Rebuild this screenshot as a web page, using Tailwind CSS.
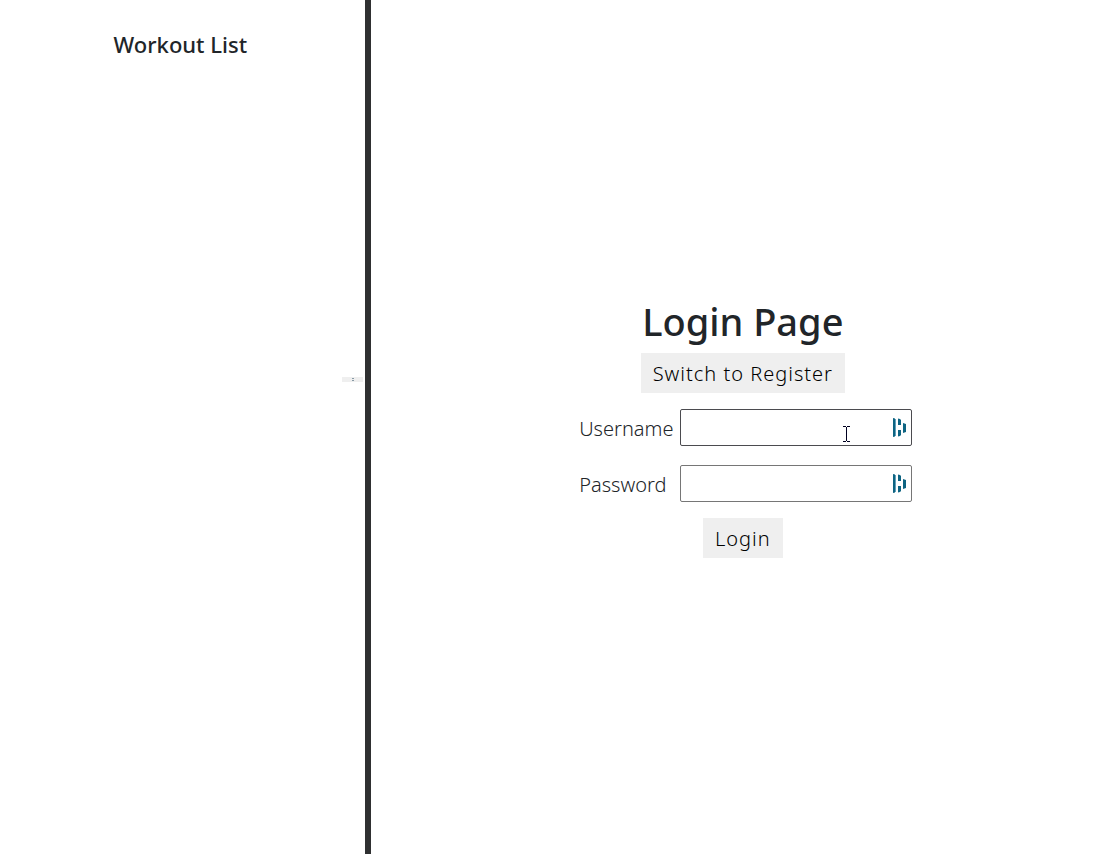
<!DOCTYPE html>
<html lang="en">
<head>
<meta charset="utf-8">
<meta name="viewport" content="width=device-width, initial-scale=1">
<title>Workout List</title>
<script src="https://cdn.jsdelivr.net/npm/@tailwindcss/browser@4"></script>
</head>
<body class="flex min-h-screen bg-white font-['Noto_Sans',sans-serif] text-[#212529]">
  <aside class="relative w-1/3 border-r-6 border-[#2f3031] px-4 pt-7">
    <h2 class="pr-1 text-center text-[22px] leading-8 font-medium">Workout List</h2>
    <button type="button" aria-label="Toggle menu" class="absolute top-[377px] right-0.5 flex h-[5px] w-[21px] items-center justify-center bg-[#efefef]">
      <svg class="h-[5px] w-[7px]" viewBox="0 0 7 5" shape-rendering="crispEdges" fill="#8799a5"><path d="M3 1h2v1H3zM3 3h2v1H3z"/></svg>
    </button>
  </aside>
  <main class="flex flex-1 flex-col items-center justify-center pl-[3px]">
    <h1 class="mb-2 text-[38px] leading-12 font-medium">Login Page</h1>
    <button type="button" class="h-10 bg-[#efefef] px-3 pt-0.5 text-[20px] font-light tracking-wider text-black">Switch to Register</button>
    <form class="mt-4 flex flex-col items-center">
      <div class="grid grid-cols-[auto_auto] items-center gap-x-[7px] gap-y-[19px] pl-1.5">
        <label for="username" class="pt-1 text-[20px] leading-7 font-light">Username</label>
        <div class="relative">
          <input id="username" type="text" class="block h-[37px] w-58 rounded-xs border border-[#4b4b4f] bg-white px-2 pr-8 outline-none">
          <svg class="absolute top-[9px] right-1 h-5 w-4" viewBox="0 0 16 20" aria-hidden="true"><path fill="#62a0bb" d="M3 1h1v17H3zM8 2h1v5H8zM8 12h1v5H8z"/><path fill="#0e6482" d="M1 0l2 .5v18l-2 .5zM6 .5l2 .5 1 1v5H6zM6 12h3v5l-1 1-2 .5zM11 5l3 1v8l-3 1z"/></svg>
          <svg class="absolute top-4 left-[162px] h-[17px] w-2" viewBox="0 0 8 17" fill="#000020" shape-rendering="crispEdges" aria-hidden="true"><path d="M1 1h3v1H1zM5 1h3v1H5zM4 2h1v14H4zM1 16h3v1H1zM5 16h3v1H5z"/></svg>
        </div>
        <label for="password" class="pt-1 text-[20px] leading-7 font-light">Password</label>
        <div class="relative">
          <input id="password" type="password" class="block h-[37px] w-58 rounded-xs border border-[#767676] bg-white px-2 pr-8 outline-none">
          <svg class="absolute top-[9px] right-1 h-5 w-4" viewBox="0 0 16 20" aria-hidden="true"><path fill="#62a0bb" d="M3 1h1v17H3zM8 2h1v5H8zM8 12h1v5H8z"/><path fill="#0e6482" d="M1 0l2 .5v18l-2 .5zM6 .5l2 .5 1 1v5H6zM6 12h3v5l-1 1-2 .5zM11 5l3 1v8l-3 1z"/></svg>
        </div>
      </div>
      <button type="submit" class="mt-4 h-10 bg-[#efefef] px-3 pt-0.5 text-[20px] font-light tracking-wider text-black">Login</button>
    </form>
  </main>
</body>
</html>
